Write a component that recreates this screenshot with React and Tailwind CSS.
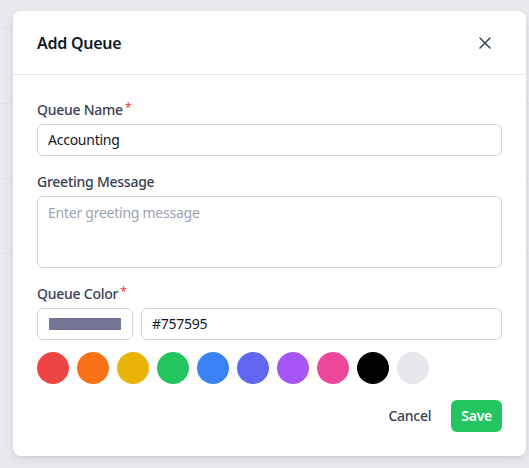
import React from "react";
import { X } from "lucide-react";

const swatches = [
  "bg-[#ef4444]",
  "bg-[#f97316]",
  "bg-[#eab308]",
  "bg-[#22c55e]",
  "bg-[#3b82f6]",
  "bg-[#6366f1]",
  "bg-[#a855f7]",
  "bg-[#ec4899]",
  "bg-[#000000]",
  "bg-[#e5e7eb]",
];

function Label({ children, required }) {
  return (
    <label className="mb-1 flex items-start text-sm leading-5 font-medium text-[#374151]">
      {children}
      {required && <span className="ml-0.5 text-xs leading-4 text-[#ef4444]">*</span>}
    </label>
  );
}

export default function App() {
  return (
    <div
      className="relative h-[468px] w-[529px] overflow-hidden bg-[#e9eaed] tracking-[-0.25px]"
      style={{ fontFamily: '"Noto Sans", "Open Sans", sans-serif' }}
    >
      <div className="flex flex-col">
        <div className="h-[29px] border-b border-[#e1e2e6]" />
        <div className="h-[75px] border-b border-[#e1e2e6]" />
        <div className="h-[75px] border-b border-[#e1e2e6]" />
        <div className="h-[75px] border-b border-[#e1e2e6]" />
      </div>

      <div className="absolute left-[13px] top-[11px] w-[513px] rounded-lg bg-white shadow-[0_4px_12px_rgba(0,0,0,0.08),0_1px_3px_rgba(0,0,0,0.06)]">
        <div className="flex h-[64px] items-center justify-between border-b border-[#e5e7eb] pl-6 pr-[25px]">
          <h2 className="text-base font-semibold text-[#111827]">Add Queue</h2>
          <button className="flex h-8 w-8 items-center justify-center text-[#374151]">
            <X size={20} strokeWidth={1.75} />
          </button>
        </div>

        <div className="flex flex-col px-6 pt-[25px] pb-6">
          <div className="flex flex-col">
            <Label required>Queue Name</Label>
            <div className="flex h-8 items-center rounded-md border border-[#d1d5db] px-2.5 text-sm text-[#111827]">
              Accounting
            </div>
          </div>

          <div className="mt-4 flex flex-col">
            <Label>Greeting Message</Label>
            <div className="h-[72px] rounded-md border border-[#d1d5db] px-2.5 pt-1.5 text-sm text-[#9ca3af]">
              Enter greeting message
            </div>
          </div>

          <div className="mt-4 flex flex-col">
            <Label required>Queue Color</Label>
            <div className="flex gap-2">
              <div className="flex h-8 w-24 items-center justify-center rounded-md border border-[#d1d5db]">
                <div className="h-3 w-[72px] bg-[#757595]" />
              </div>
              <div className="flex h-8 flex-1 items-center rounded-md border border-[#d1d5db] px-2.5 text-sm text-[#111827]">
                #757595
              </div>
            </div>
            <div className="mt-3 flex gap-2">
              {swatches.map((c, i) => (
                <div key={i} className={`h-8 w-8 rounded-full ${c}`} />
              ))}
            </div>
          </div>

          <div className="mt-4 flex items-center justify-end gap-2">
            <button className="h-8 rounded-md px-3 text-sm font-medium text-[#374151]">Cancel</button>
            <button className="h-8 rounded-md bg-[#22c55e] px-2.5 text-sm font-semibold text-white">Save</button>
          </div>
        </div>
      </div>
    </div>
  );
}
